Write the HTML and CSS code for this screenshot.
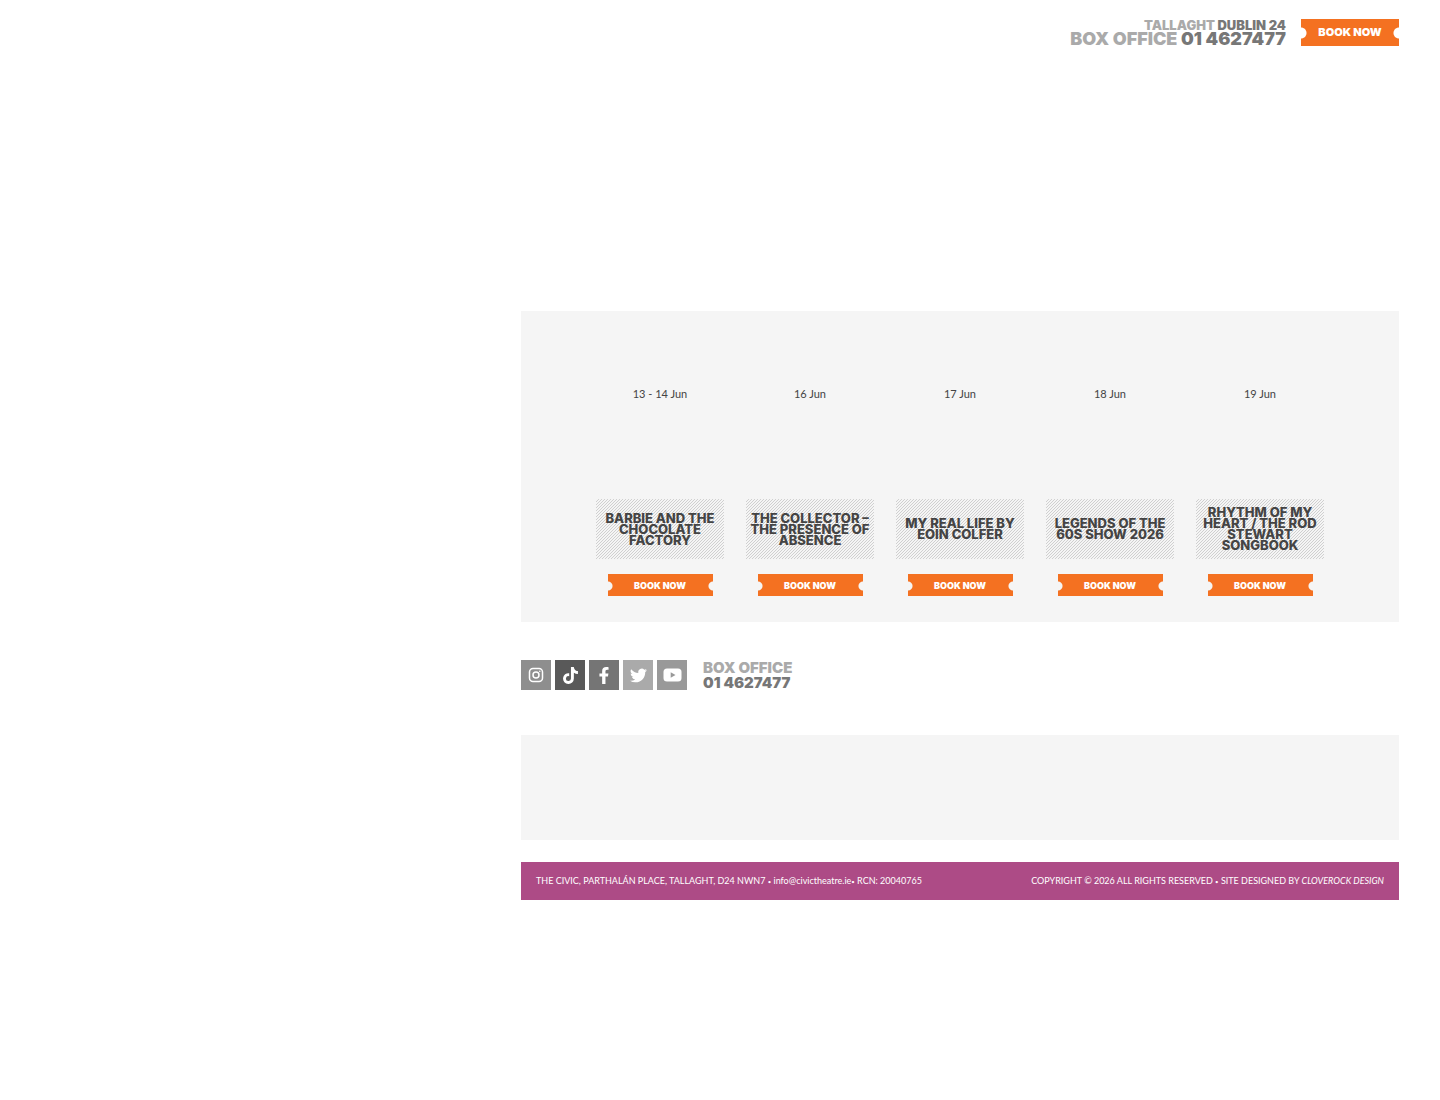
FILE: index.html
```html
<!DOCTYPE html>
<html lang="en">
<head>
    <meta charset="UTF-8">
    <meta name="viewport" content="width=device-width, initial-scale=1.0">
    <title>The Civic</title>
    <link rel="stylesheet" href="styles.css">
</head>
<body>
    <header class="header">
        <div class="contact">
            <div class="contact-place">TALLAGHT <span class="dark">DUBLIN 24</span></div>
            <div class="contact-phone">BOX OFFICE <span class="dark">01 4627477</span></div>
        </div>
        <a href="#" class="ticket ticket-large">BOOK NOW</a>
    </header>

    <main class="content">
        <!-- Upcoming shows -->
        <section class="shows">
            <article class="show">
                <p class="show-date">13 - 14 Jun</p>
                <h3 class="show-title">BARBIE AND THE<br>CHOCOLATE<br>FACTORY</h3>
                <a href="#" class="ticket">BOOK NOW</a>
            </article>
            <article class="show">
                <p class="show-date">16 Jun</p>
                <h3 class="show-title">THE COLLECTOR –<br>THE PRESENCE OF<br>ABSENCE</h3>
                <a href="#" class="ticket">BOOK NOW</a>
            </article>
            <article class="show">
                <p class="show-date">17 Jun</p>
                <h3 class="show-title">MY REAL LIFE BY<br>EOIN COLFER</h3>
                <a href="#" class="ticket">BOOK NOW</a>
            </article>
            <article class="show">
                <p class="show-date">18 Jun</p>
                <h3 class="show-title">LEGENDS OF THE<br>60S SHOW 2026</h3>
                <a href="#" class="ticket">BOOK NOW</a>
            </article>
            <article class="show">
                <p class="show-date">19 Jun</p>
                <h3 class="show-title">RHYTHM OF MY<br>HEART / THE ROD<br>STEWART<br>SONGBOOK</h3>
                <a href="#" class="ticket">BOOK NOW</a>
            </article>
        </section>

        <!-- Social links and phone -->
        <section class="social">
            <a href="#" class="social-link instagram" aria-label="Instagram">
                <svg width="16" height="16" viewBox="0 0 16 16" fill="none" stroke="#fff" stroke-width="1.5"><rect x="1.5" y="1.5" width="13" height="13" rx="3.5"/><circle cx="8" cy="8" r="3"/><circle cx="11.8" cy="4.2" r="0.8" fill="#fff" stroke="none"/></svg>
            </a>
            <a href="#" class="social-link tiktok" aria-label="TikTok">
                <svg width="15" height="17" viewBox="0 0 448 512" fill="#fff"><path d="M448 209.9a210.1 210.1 0 0 1-122.8-39.3v178.8A162.6 162.6 0 1 1 185 188.3v89.9a74.6 74.6 0 1 0 52.2 71.2V0h88a121 121 0 0 0 1.9 22.2 122 122 0 0 0 53.9 80.2 121 121 0 0 0 67 20.1z"/></svg>
            </a>
            <a href="#" class="social-link facebook" aria-label="Facebook">
                <svg width="12" height="17" viewBox="20 0 280 512" fill="#fff"><path d="M279 288l14-93h-89v-60c0-25 12-50 52-50h41V7s-37-7-72-7c-73 0-121 44-121 125v70H23v93h81v224h100V288z"/></svg>
            </a>
            <a href="#" class="social-link twitter" aria-label="Twitter">
                <svg width="17" height="17" viewBox="0 0 24 24" fill="#fff"><path d="M24 4.6a10 10 0 0 1-2.8.8 4.9 4.9 0 0 0 2.1-2.7 10 10 0 0 1-3.1 1.2 4.9 4.9 0 0 0-8.4 4.5A14 14 0 0 1 1.7 3.1a4.9 4.9 0 0 0 1.5 6.6 4.9 4.9 0 0 1-2.2-.6v.1a4.9 4.9 0 0 0 3.9 4.8 4.9 4.9 0 0 1-2.2.1 4.9 4.9 0 0 0 4.6 3.4A9.9 9.9 0 0 1 0 19.5a14 14 0 0 0 7.5 2.2c9.1 0 14-7.5 14-14v-.6A10 10 0 0 0 24 4.6z"/></svg>
            </a>
            <a href="#" class="social-link youtube" aria-label="YouTube">
                <svg width="19" height="14" viewBox="0 0 19 14"><rect x="0.5" y="0.5" width="18" height="13" rx="3.5" fill="#fff"/><path d="M7.7 4.2v5.6l4.8-2.8z" fill="#999"/></svg>
            </a>
            <div class="social-phone">BOX OFFICE<br><span class="dark">01 4627477</span></div>
        </section>

        <section class="partners"></section>

        <footer class="footer">
            <div>THE CIVIC, PARTHALÁN PLACE, TALLAGHT, D24 NWN7 <span class="dot">•</span> <a href="#">info@civictheatre.ie</a><span class="dot">•</span> RCN: 20040765</div>
            <div>COPYRIGHT © 2026 ALL RIGHTS RESERVED <span class="dot">•</span> SITE DESIGNED BY <a href="#"><em>CLOVEROCK DESIGN</em></a></div>
        </footer>
    </main>
</body>
</html>
```
FILE: styles.css
```css
body {
    font-family: Lato, "Open Sans", sans-serif;
    color: #444;
    background: #fff;
    margin: 0;
}

a {
    color: inherit;
    text-decoration: none;
}

.dark {
    color: #777;
}

/* Top bar */
.header {
    display: flex;
    justify-content: flex-end;
    align-items: flex-start;
    gap: 15px;
    height: 292px;
    padding: 19px 41px 0;
    box-sizing: border-box;
    margin-bottom: 19px;
}

.contact {
    font-family: Inter, sans-serif;
    font-weight: 900;
    color: #aaa;
    text-align: right;
}

.contact-place {
    font-size: 13px;
    line-height: 12px;
}

.contact-phone {
    font-size: 18px;
    line-height: 16px;
}

/* Orange ticket buttons, notched at both sides */
.ticket {
    display: block;
    width: 105px;
    height: 22px;
    font-family: Inter, sans-serif;
    font-size: 9px;
    line-height: 24px;
    font-weight: 900;
    text-align: center;
    color: #fff;
    background:
        radial-gradient(circle at 0 12px, #f5f5f5 4px, transparent 5px),
        radial-gradient(circle at 100% 12px, #f5f5f5 4px, transparent 5px),
        #f47121;
}

.ticket-large {
    width: 98px;
    height: 27px;
    font-size: 11px;
    line-height: 26px;
    background:
        radial-gradient(circle at 0 14px, #fff 5px, transparent 6px),
        radial-gradient(circle at 100% 14px, #fff 5px, transparent 6px),
        #f47121;
}

.content {
    margin: 0 41px 0 521px;
}

/* Shows */
.shows {
    display: flex;
    justify-content: center;
    gap: 22px;
    padding: 75px 0 26px;
    background: #f5f5f5;
}

.show {
    display: flex;
    flex-direction: column;
    align-items: center;
    width: 128px;
}

.show-date {
    font-size: 11px;
    line-height: 16px;
    margin: 0 0 97px;
}

.show-title {
    display: flex;
    align-items: center;
    justify-content: center;
    width: 100%;
    height: 60px;
    margin: 0 0 15px;
    font-family: Inter, sans-serif;
    font-size: 13px;
    line-height: 11px;
    font-weight: 800;
    text-align: center;
    white-space: nowrap;
    /* diagonal hatching */
    background: url("data:image/svg+xml,%3Csvg xmlns='http://www.w3.org/2000/svg' width='3' height='3' shape-rendering='crispEdges' fill='%23d0d0d0'%3E%3Cpath d='M2 0h1v1h-1zM1 1h1v1h-1zM0 2h1v1h-1z'/%3E%3C/svg%3E");
}

/* Social links */
.social {
    display: flex;
    align-items: center;
    gap: 4px;
    padding: 38px 0 45px;
}

.social-link {
    display: flex;
    align-items: center;
    justify-content: center;
    width: 30px;
    height: 30px;
}

.instagram { background: #8e8e8e; }
.tiktok { background: #595959; }
.facebook { background: #757575; }
.twitter { background: #aaa; }
.youtube { background: #999; }

.social-phone {
    margin-left: 12px;
    font-family: Inter, sans-serif;
    font-size: 15px;
    line-height: 15px;
    font-weight: 900;
    color: #aaa;
}

.partners {
    height: 105px;
    margin-bottom: 22px;
    background: #f5f5f5;
}

.footer {
    display: flex;
    justify-content: space-between;
    padding: 0 15px;
    font-size: 9px;
    line-height: 38px;
    color: #fff;
    background: #ad4b86;
}

.dot {
    font-size: 6px;
    line-height: 1;
}
```
